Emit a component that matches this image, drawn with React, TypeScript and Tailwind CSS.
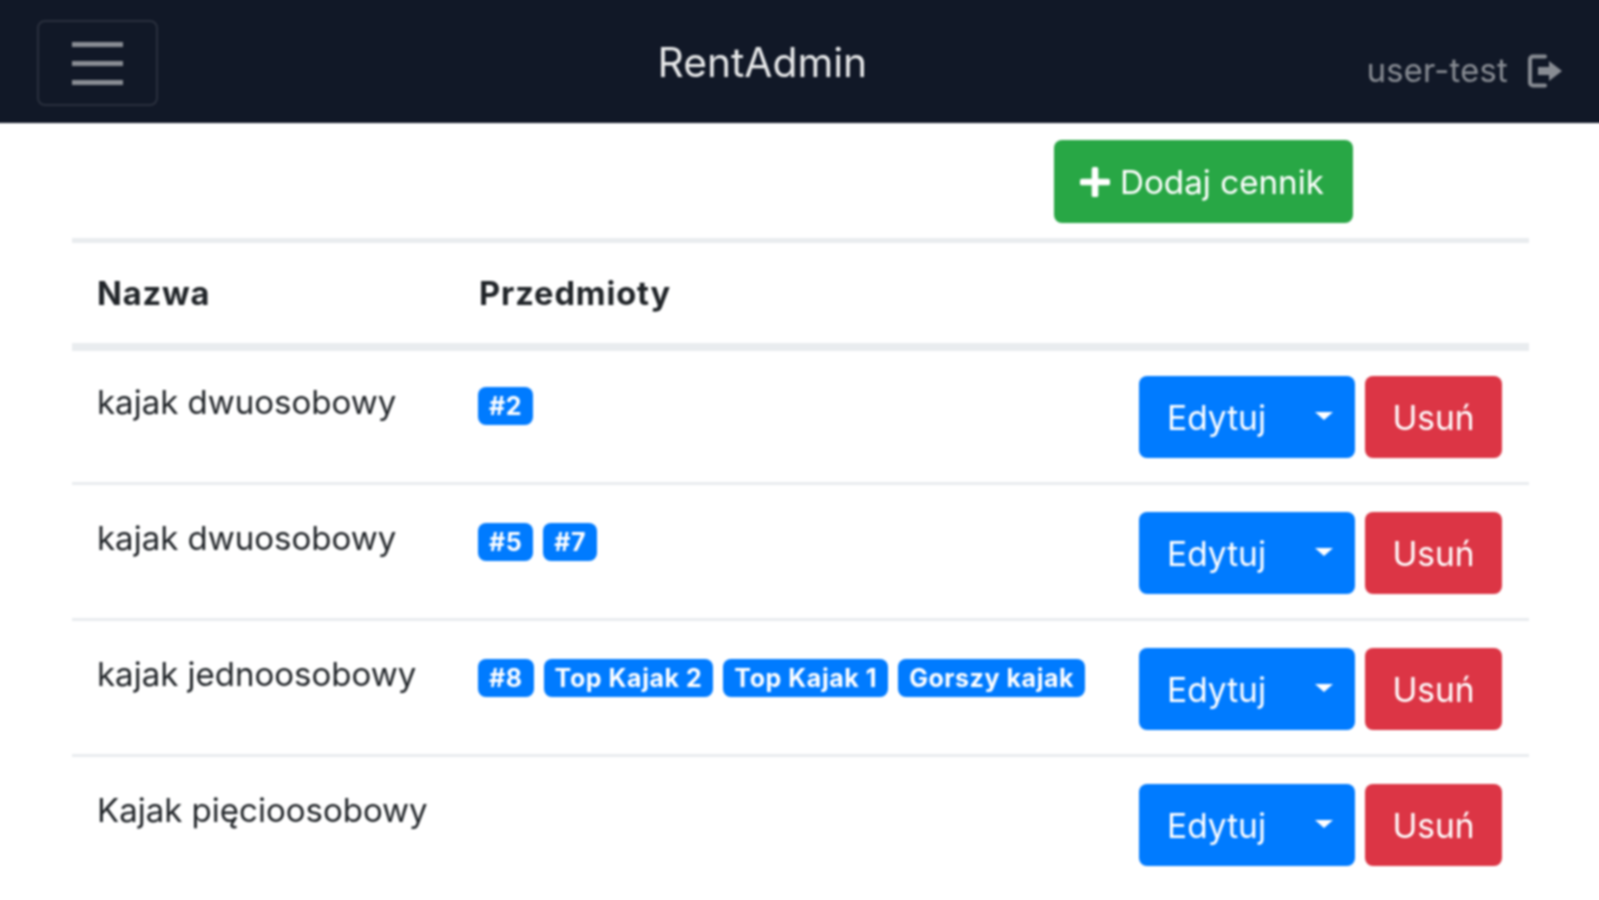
const rows = [
  { name: 'kajak dwuosobowy', items: ['#2'] },
  { name: 'kajak dwuosobowy', items: ['#5', '#7'] },
  { name: 'kajak jednoosobowy', items: ['#8', 'Top Kajak 2', 'Top Kajak 1', 'Gorszy kajak'] },
  { name: 'Kajak pięcioosobowy', items: [] as string[] },
];

const LogoutIcon = () => (
  <svg viewBox="0 0 34 34" className="w-[34px] h-[34px] mt-[1px]" fill="none">
    <path d="M17 2.5H5a3 3 0 0 0-3 3v23a3 3 0 0 0 3 3h12" stroke="currentColor" strokeWidth="4" strokeLinecap="round" />
    <path d="M10 13h11V7l13 10-13 10v-6H10z" fill="currentColor" />
  </svg>
);

const PlusIcon = () => (
  <svg viewBox="0 0 32 32" className="w-[30px] h-[30px]" fill="currentColor">
    <rect x="12.5" y="0" width="7" height="32" rx="2" />
    <rect x="0" y="12.5" width="32" height="7" rx="2" />
  </svg>
);

const App = () => {
  return (
    <div className="h-[900px] overflow-hidden bg-white">
      <div className="-ml-[4px] -mt-[4px] w-[1607px] h-[908px] bg-white text-[33px] leading-[49px] text-[#212529] font-['Inter','Liberation_Sans',sans-serif] blur-[1px]">
        {/* Navbar */}
        <nav className="h-[127px] pt-[4px] bg-[#111827] px-[41px] flex items-center justify-between">
          <button className="w-[121px] h-[86px] border-2 border-white/10 rounded-[8px] flex flex-col items-center justify-center gap-[14px] mt-[3px]">
            <span className="block w-[51px] h-[5px] bg-white/50" />
            <span className="block w-[51px] h-[5px] bg-white/50" />
            <span className="block w-[51px] h-[5px] bg-white/50" />
          </button>
          <div className="text-[40.8px] text-white/90 mt-[1px]">RentAdmin</div>
          <div className="flex items-center gap-[20px] text-white/50 mt-[17px] text-[32.6px] tracking-[0.3px]">
            <span>user-test</span>
            <LogoutIcon />
          </div>
        </nav>

        <div className="pl-[76px]">
          <div className="pt-[17px] pl-[982px] h-[115px]">
            <button className="w-[299px] h-[83px] pr-[3px] pt-[1px] bg-[#28a745] text-white rounded-[8px] flex items-center justify-center gap-[10px] text-[33.2px]">
              <PlusIcon />
              Dodaj cennik
            </button>
          </div>

          <table className="w-[1457px] table-fixed border-collapse">
            <colgroup>
              <col className="w-[382px]" />
              <col className="w-[659px]" />
              <col />
            </colgroup>
            <thead>
              <tr className="border-t-[5px] border-b-[8px] border-[#e9ecef]">
                <th className="text-left font-bold pl-[25px] pt-[26px] pb-[25px] text-[32.6px] tracking-[0.9px]">Nazwa</th>
                <th className="text-left font-bold pl-[25px] pt-[26px] pb-[25px] text-[32.6px] tracking-[0.9px]">Przedmioty</th>
                <th />
              </tr>
            </thead>
            <tbody>
              {rows.map((row, i) => (
                <tr key={i} className="border-b-[3px] border-[#e9ecef] last:border-b-0">
                  <td className={`align-top pl-[25px] ${i === 0 ? 'pt-[27px]' : 'pt-[29px]'}`}>{row.name}</td>
                  <td className={`align-top pl-[24px] whitespace-nowrap ${i === 0 ? 'pt-[36px]' : 'pt-[38px]'}`}>
                    <div className="flex gap-[10px]">
                      {row.items.map((item) => (
                        <span
                          key={item}
                          className="h-[38px] px-[11px] bg-[#007bff] text-white font-bold text-[25px] tracking-[0.55px] leading-[38px] rounded-[8px]"
                        >
                          {item}
                        </span>
                      ))}
                    </div>
                  </td>
                  <td className={`align-top pb-[24px] pr-[27px] ${i === 0 ? 'pt-[25px]' : 'pt-[27px]'}`}>
                    <div className="flex justify-end gap-[10px] text-[33.5px]">
                      <div className="w-[216px] h-[82px] pt-[2px] bg-[#007bff] text-white rounded-[8px] flex items-center pl-[28px]">
                        <span>Edytuj</span>
                        <span className="ml-[49px] -mt-[5px] border-x-[9px] border-x-transparent border-t-[8px] border-t-white" />
                      </div>
                      <div className="w-[137px] h-[82px] pt-[2px] bg-[#dc3545] text-white rounded-[8px] flex items-center justify-center">
                        Usuń
                      </div>
                    </div>
                  </td>
                </tr>
              ))}
            </tbody>
          </table>
        </div>
      </div>
    </div>
  );
};

export default App;
